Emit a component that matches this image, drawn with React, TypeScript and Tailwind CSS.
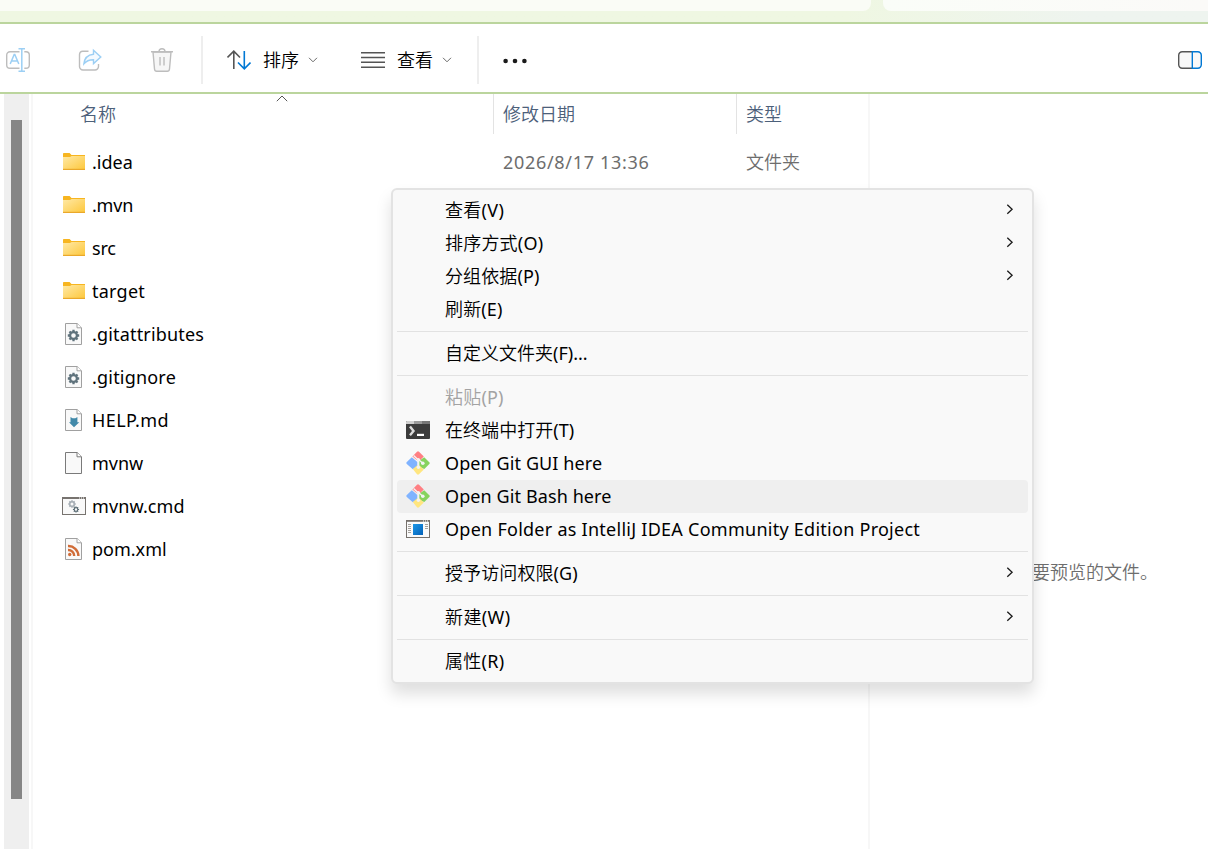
import type { ReactNode } from 'react'

type IconKind = 'folder' | 'config' | 'markdown' | 'blank' | 'script' | 'feed'

interface FileEntry {
  name: string
  icon: IconKind
  className?: string
  date?: string
  type?: string
}

interface MenuEntry {
  label: string
  accel?: string
  icon?: ReactNode
  submenu?: boolean
  disabled?: boolean
  active?: boolean
  className?: string
}

const FILES: FileEntry[] = [
  { name: '.idea', icon: 'folder', date: '2026/8/17 13:36', type: '文件夹' },
  { name: '.mvn', icon: 'folder', className: '-tracking-[0.2px]' },
  { name: 'src', icon: 'folder', className: '-tracking-[0.2px]' },
  { name: 'target', icon: 'folder', className: 'tracking-[0.25px]' },
  { name: '.gitattributes', icon: 'config', className: 'tracking-[0.17px]' },
  { name: '.gitignore', icon: 'config', className: 'tracking-[0.2px]' },
  { name: 'HELP.md', icon: 'markdown', className: 'tracking-[0.4px]' },
  { name: 'mvnw', icon: 'blank' },
  { name: 'mvnw.cmd', icon: 'script', className: 'tracking-[0.1px]' },
  { name: 'pom.xml', icon: 'feed' },
]

const MENU: MenuEntry[][] = [
  [
    { label: '查看', accel: '(V)', submenu: true, className: 'tracking-[0.3px]' },
    { label: '排序方式', accel: '(O)', submenu: true, className: 'tracking-[0.2px]' },
    { label: '分组依据', accel: '(P)', submenu: true, className: 'tracking-[0.1px]' },
    { label: '刷新', accel: '(E)', className: 'tracking-[0.15px]' },
  ],
  [{ label: '自定义文件夹', accel: '(F)...' }],
  [
    { label: '粘贴', accel: '(P)', disabled: true, className: 'tracking-[0.2px]' },
    { label: '在终端中打开', accel: '(T)', icon: <TerminalIcon />, className: 'tracking-[0.05px]' },
    { label: 'Open Git GUI here', icon: <GitIcon />, className: 'tracking-[0.1px]' },
    { label: 'Open Git Bash here', icon: <GitIcon />, active: true, className: 'tracking-[0.1px]' },
    {
      label: 'Open Folder as IntelliJ IDEA Community Edition Project',
      icon: <WindowIcon />,
      className: 'tracking-[0.26px]',
    },
  ],
  [{ label: '授予访问权限', accel: '(G)', submenu: true, className: 'tracking-[0.1px]' }],
  [{ label: '新建', accel: '(W)', submenu: true, className: 'tracking-[0.4px]' }],
  [{ label: '属性', accel: '(R)', className: 'tracking-[0.3px]' }],
]

function TerminalIcon() {
  return (
    <svg width="24" height="18" viewBox="0 0 24 18">
      <rect width="24" height="18" rx="1" fill="#3b3b3b" />
      <path d="M1 0h7v3H0V1a1 1 0 0 1 1-1z" fill="#cfcfcf" />
      <path d="M8 0h8v3H8z" fill="#9a9a9a" />
      <path d="M16 0h7a1 1 0 0 1 1 1v2h-8z" fill="#777" />
      <path d="M4 5.5 7.5 10 4 14.2" fill="none" stroke="#dcdcdc" strokeWidth="2.4" />
      <path d="M11 12.8h7v2.2h-7z" fill="#fff" />
    </svg>
  )
}

function GitIcon() {
  return (
    <svg width="24" height="24" viewBox="0 0 24 24">
      <path d="M6.4 5.4 11 .8q1-1 2 0l4.8 4.8-3.2 3.2L12 10z" fill="#ff7f83" />
      <path d="M5.8 6.2 11.4 11v5l-4.6 2.2L.8 13q-1-1 0-2z" fill="#80b3ff" />
      <path d="M18.2 6.2 23.3 11.2q.9.9 0 1.8l-5 5-5-2V9.8z" fill="#87d35e" />
      <path d="M6.8 18 11 14.6h2.6l4.2 3.8-4.8 4.9q-1 .9-2 0z" fill="#ffe680" />
      <path d="M7.6 4.4 12.4 9v8M12.8 8.8l4 3.4" fill="none" stroke="#f3f3f3" strokeWidth="1.4" />
      <circle cx="12.4" cy="8.6" r="1.6" fill="#f3f3f3" />
      <circle cx="16.8" cy="12.2" r="1.8" fill="#f3f3f3" />
      <circle cx="12.4" cy="16.2" r="1.7" fill="#f3f3f3" />
    </svg>
  )
}

function WindowIcon() {
  return (
    <svg width="24" height="18" viewBox="0 0 24 18">
      <defs>
        <linearGradient id="pane" x1="0" y1="0" x2="1" y2="1">
          <stop offset="0" stopColor="#1b96e6" />
          <stop offset="1" stopColor="#0562b8" />
        </linearGradient>
      </defs>
      <rect x=".5" y=".5" width="23" height="17" fill="#fafafa" stroke="#76716c" />
      <path d="M0 .5h24v1.3H0z" fill="#76716c" />
      <path d="M17 1h1m1 0h1m1 0h1" stroke="#fff" />
      <rect x="7" y="4" width="10" height="11" fill="url(#pane)" />
      <path d="M2 4.5h3M2 6.5h3M2 8.5h3M2 10.5h3M2 12.5h3M19 4.5h3M19 6.5h3M19 8.5h3" stroke="#a5a19d" />
    </svg>
  )
}

function Gear({ x, y, scale = 1, color }: { x: number; y: number; scale?: number; color: string }) {
  return (
    <g transform={`translate(${x} ${y}) scale(${scale})`} stroke={color} fill="none">
      <circle r="3.4" strokeWidth="2.2" />
      {[0, 45, 90, 135].map((a) => (
        <path key={a} d="M0-5.7v2.2M0 3.5v2.2" strokeWidth="2.3" transform={`rotate(${a})`} />
      ))}
    </g>
  )
}

function FileIcon({ kind }: { kind: IconKind }) {
  if (kind === 'folder') {
    return (
      <svg width="22" height="17" viewBox="0 0 22 17">
        <defs>
          <linearGradient id="folder" x1="0" y1="0" x2="1" y2="1">
            <stop offset="0" stopColor="#ffe9a6" />
            <stop offset="1" stopColor="#fdc73a" />
          </linearGradient>
        </defs>
        <path d="M0 .8Q0 0 .8 0h5.8L8.5 2H22v4H0z" fill="#f7b520" />
        <path d="M0 4h7l1.6-1H22v14H0z" fill="url(#folder)" />
        <path d="M0 16.4h22" stroke="#eaa82a" strokeWidth="1.2" />
      </svg>
    )
  }
  if (kind === 'script') {
    return (
      <svg width="24" height="18" viewBox="0 0 24 18">
        <rect x=".5" y=".5" width="23" height="17" fill="#f9f9f9" stroke="#77736f" />
        <path d="M0 1h24" stroke="#77736f" strokeWidth="2" />
        <path d="M17 1h1m1 0h1m1 0h1" stroke="#fff" />
        <Gear x={10} y={7} scale={0.66} color="#a5adb4" />
        <Gear x={14} y={12.5} scale={0.54} color="#596a73" />
      </svg>
    )
  }
  return (
    <svg width="17" height="22" viewBox="0 0 17 22" className="mr-px">
      <path d="M.5.5h11.7l4.3 4.3v16.7H.5z" fill="#f9f9f9" stroke={kind === 'blank' ? '#7a7a7a' : '#a0a0a0'} />
      <path d="M12 .5v4.3h4.5" fill="#fff" stroke={kind === 'blank' ? '#7a7a7a' : '#a0a0a0'} />
      {kind === 'config' && <Gear x={8.5} y={12.5} color="#5f727c" />}
      {kind === 'markdown' && (
        <path d="M5.5 8l2 1.2h2.9l2-1.2v5.2h1.9L9 18.2l-5-5h1.5z" fill="#4189a9" />
      )}
      {kind === 'feed' && (
        <g fill="none" stroke="#d06c38" strokeWidth="2.4">
          <path d="M3 8a10 10 0 0 1 10.4 10M3 12a6 6 0 0 1 6.2 6" />
          <circle cx="4.7" cy="16.5" r="1.7" fill="#d06c38" stroke="none" />
        </g>
      )}
    </svg>
  )
}

function Chevron({ className }: { className: string }) {
  return (
    <svg width="10" height="6" viewBox="0 0 10 6" className={className}>
      <path d="M1 .8 5 4.8 9 .8" fill="none" stroke="#6a6a6a" />
    </svg>
  )
}

function Toolbar() {
  return (
    <div className="flex h-[72px] shrink-0 items-center border-y-2 border-[#bbd59d] bg-white pt-1 text-black">
      <svg width="24" height="24" viewBox="0 0 24 24" className="ml-1.5 shrink-0" fill="none">
        <path d="M13.5 3.7H4A3.3 3.3 0 0 0 .7 7v10A3.3 3.3 0 0 0 4 20.3h9.5M18.3 3.7H20A3.3 3.3 0 0 1 23.3 7v10a3.3 3.3 0 0 1-3.3 3.3h-1.7" stroke="#bdbdbd" strokeWidth="1.4" />
        <path d="M4.2 16 8.2 6.5h.6L12.8 16M5.6 13h5.8M15.8.7v22.6M12.5.7H19M12.5 23.3H19" stroke="#9ccff4" strokeWidth="1.5" />
      </svg>
      <svg width="24" height="24" viewBox="0 0 24 24" className="ml-12 shrink-0" fill="none">
        <path d="M10.5 3.2H4.8A3.5 3.5 0 0 0 1.5 6.7v11.8A3.5 3.5 0 0 0 5 22h12a3.5 3.5 0 0 0 3.5-3.5V16" stroke="#bdbdbd" strokeWidth="1.4" />
        <path d="M15.5 2.3 22.8 9l-7.3 6.6v-3.9c-4.2-.1-7 1-9.6 4.1.5-5.3 3.7-9 9.6-9.6z" fill="#f4faff" stroke="#9ccff4" strokeWidth="1.4" />
      </svg>
      <svg width="24" height="24" viewBox="0 0 24 24" className="ml-12 shrink-0" fill="none" stroke="#bdbdbd" strokeWidth="1.4">
        <path d="M3 4l1.5 17q.2 2.2 2.2 2.2h10.6q2 0 2.2-2.2L21 4z" fill="#f6f6f6" />
        <path d="M1 3.7h22M9 3.7q0-3 3-3t3 3M10 9v8.5M14 9v8.5" />
      </svg>
      <div className="ml-[27px] h-12 w-0.5 bg-[#eee]" />
      <svg width="24" height="20" viewBox="0 0 24 20" className="ml-6 shrink-0" fill="none" strokeWidth="1.6">
        <path d="M6.8 19V1.5M.5 7.5l6.3-6.3 6.2 6.3" stroke="#555" />
        <path d="M17.3 1v17.5M11 12.5l6.3 6.3 6.2-6.3" stroke="#0078d4" />
      </svg>
      <span className="ml-3 font-[350]">排序</span>
      <Chevron className="ml-[9px]" />
      <svg width="24" height="16" viewBox="0 0 24 16" className="ml-[43px] shrink-0">
        <path d="M0 .7h24M0 5.5h24M0 10.3h24M0 15.2h24" stroke="#555" strokeWidth="1.4" />
      </svg>
      <span className="ml-3 font-[350]">查看</span>
      <Chevron className="ml-[9px]" />
      <div className="ml-[25px] h-12 w-0.5 bg-[#eee]" />
      <svg width="26" height="6" viewBox="0 0 26 6" className="ml-6 mt-0.5 shrink-0" fill="#1a1a1a">
        <circle cx="2.6" cy="3" r="2.3" />
        <circle cx="12" cy="3" r="2.3" />
        <circle cx="21.4" cy="3" r="2.3" />
      </svg>
      <svg width="24" height="18" viewBox="0 0 24 18" className="ml-auto mr-1.5 shrink-0" fill="#f8f8f8" strokeWidth="1.4">
        <path d="M14 .7H4.2A3.5 3.5 0 0 0 .7 4.2v9.6a3.5 3.5 0 0 0 3.5 3.5H14" stroke="#555" />
        <path d="M14.3.7h5.5a3.5 3.5 0 0 1 3.5 3.5v9.6a3.5 3.5 0 0 1-3.5 3.5h-5.5z" stroke="#0078d4" />
      </svg>
    </div>
  )
}

function ContextMenu() {
  return (
    <div className="absolute left-[391px] top-[188px] w-[643px] rounded-md border-2 border-[#e3e3e3] bg-[#f9f9f9] p-1 text-black shadow-[0_10px_16px_rgba(0,0,0,0.13)]">
      {MENU.map((group, i) => (
        <div key={i}>
          {i > 0 && <div className="my-[5px] h-px bg-[#e2e2e2]" />}
          {group.map((item) => (
            <div
              key={item.label}
              className={`flex h-[33px] items-center rounded pb-[2px] ${item.active ? 'bg-[#efefef]' : ''} ${item.disabled ? 'text-[#a3a3a3]' : ''}`}
            >
              <div className="ml-2 flex w-10 items-center pl-px">{item.icon}</div>
              <span className={item.className}>
                {item.accel ? <span className="font-[350]">{item.label}</span> : item.label}
                {item.accel}
              </span>
              {item.submenu && (
                <svg width="8" height="12" viewBox="0 0 8 12" className="ml-auto mr-3.5 -mt-px">
                  <path d="M1.3 1.8 6.1 6.3l-4.8 4.5" fill="none" stroke="#1a1a1a" strokeWidth="1.3" />
                </svg>
              )}
            </div>
          ))}
        </div>
      ))}
    </div>
  )
}

export default function App() {
  return (
    <main className="relative flex h-[849px] w-[1208px] flex-col overflow-hidden bg-white font-['Noto_Sans','Noto_Sans_CJK_SC',sans-serif] text-[18px] leading-6 whitespace-nowrap">
      {/* Bottom edge of the address and search boxes */}
      <div className="flex h-[22px] shrink-0 gap-3 bg-linear-to-r from-[#eff7e2] from-70% to-[#eef4ef] to-90%">
        <div className="h-[11px] w-[871px] rounded-br-lg bg-[#fafcf6]" />
        <div className="h-[11px] flex-1 rounded-bl-lg bg-linear-to-r from-[#fafdf8] to-[#fbfaf8]" />
      </div>
      <Toolbar />

      <div className="flex min-h-0 flex-1">
        <div className="ml-1 w-[25px] bg-[#efefef] pl-[7px] pt-[26px]">
          <div className="h-[679px] w-[11px] bg-[#868686]" />
        </div>
        <div className="ml-0.5 w-0.5 bg-[#f7f7f7]" />

        <div className="w-[835px]">
          <div className="flex h-10 font-[350] text-[#4c607a]">
            <div className="flex w-[461px] items-center border-r border-[#e3e3e3] pl-[47px]">
              名称
              <svg width="12" height="7" viewBox="0 0 12 7" className="ml-[160px] mb-[31px]">
                <path d="M.8 6.2 6 1l5.2 5.2" fill="none" stroke="#555" />
              </svg>
            </div>
            <div className="flex w-[243px] items-center border-r border-[#e3e3e3] pl-[9px]">修改日期</div>
            <div className="flex items-center pl-[9px]">类型</div>
          </div>
          <div className="pt-1.5">
            {FILES.map((file) => (
              <div key={file.name} className="flex h-[43px] items-center text-black">
                <div className="ml-7 flex w-[26px] justify-center">
                  <FileIcon kind={file.icon} />
                </div>
                <span className={`ml-[5px] w-[411px] ${file.className ?? ''}`}>{file.name}</span>
                <span className="w-[243px] tracking-[0.69px] text-[#6d6d6d]">{file.date}</span>
                <span className="font-[350] text-[#6d6d6d]">{file.type}</span>
              </div>
            ))}
          </div>
        </div>

        {/* The pane runs past the right edge, so its message sits off centre */}
        <div className="flex-1 border-l-2 border-[#f7f7f7] pl-[126px] pt-[466px] font-[350] text-[#6d6d6d]">
          选择要预览的文件。
        </div>
      </div>

      <ContextMenu />
    </main>
  )
}
